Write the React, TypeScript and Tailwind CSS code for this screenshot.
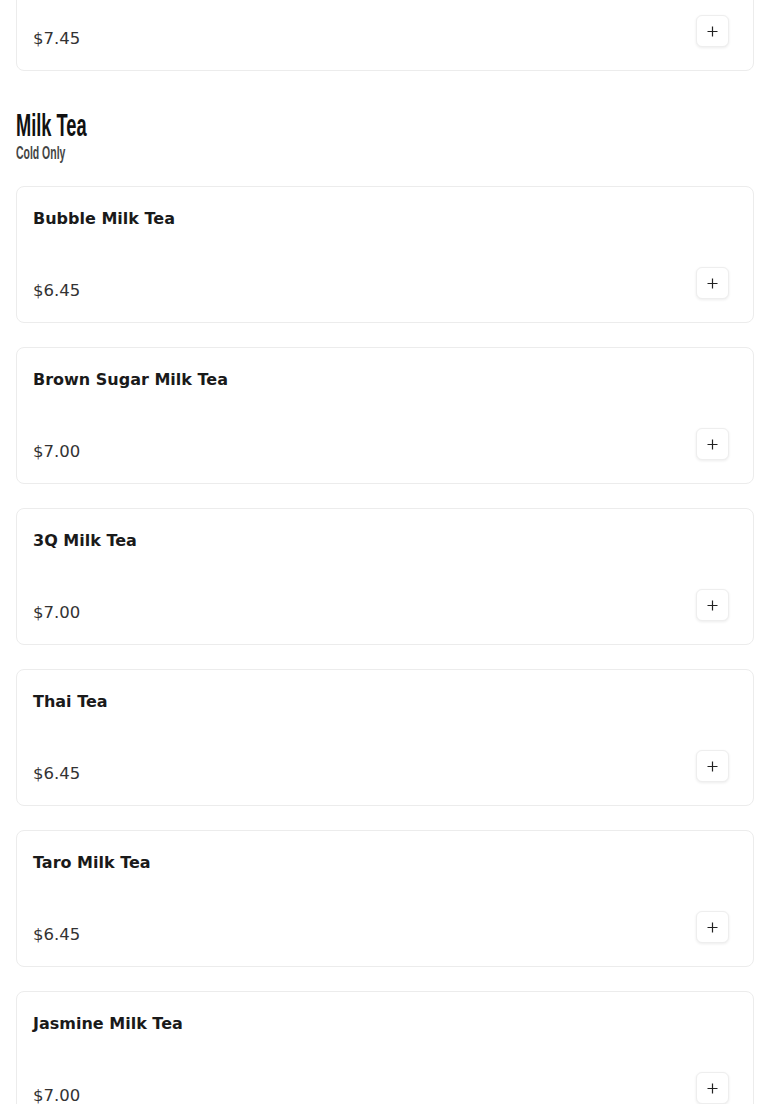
import React from "react";

const items = [
  { name: "Bubble Milk Tea", price: "$6.45" },
  { name: "Brown Sugar Milk Tea", price: "$7.00" },
  { name: "3Q Milk Tea", price: "$7.00" },
  { name: "Thai Tea", price: "$6.45" },
  { name: "Taro Milk Tea", price: "$6.45" },
  { name: "Jasmine Milk Tea", price: "$7.00" },
];

function PlusButton() {
  return (
    <button className="w-[33px] h-[32px] rounded-md border border-[#eeeeee] bg-white shadow-[0_1px_3px_rgba(0,0,0,0.08)] flex items-center justify-center">
      <svg width="11" height="11" viewBox="0 0 11 11" fill="none">
        <path d="M5.5 0.5v10M0.5 5.5h10" stroke="#222" strokeWidth="1.2" />
      </svg>
    </button>
  );
}

function Card({ name, price }: { name?: string; price: string }) {
  return (
    <div className="h-[137px] rounded-lg border border-[#ececec] bg-white flex flex-col justify-between pl-4 pr-6 pt-5 pb-[23px]">
      <div className="text-[16px] leading-6 font-bold text-[#1a1a1a]">{name ?? "\u00a0"}</div>
      <div className="flex items-end justify-between">
        <div className="text-[16.5px] leading-6 text-[#333] mb-[-4px]">{price}</div>
        <PlusButton />
      </div>
    </div>
  );
}

export default function App() {
  return (
    <div
      className="min-h-screen bg-white px-4 overflow-hidden"
      style={{ fontFamily: "'DejaVu Sans', 'Noto Sans', sans-serif" }}
    >
      <div className="-mt-[66px]">
        <Card price="$7.45" />
      </div>
      <div className="pt-[36px] pb-[21px]" style={{ fontFamily: "'Liberation Sans', Arial, sans-serif" }}>
        <h2 className="text-[32px] leading-9 text-[#111] font-bold">
          <span className="inline-block origin-left scale-x-[0.57]">Milk Tea</span>
        </h2>
        <div className="text-[19px] leading-6 text-[#444] font-bold -mt-[2px]">
          <span className="inline-block origin-left scale-x-[0.55]">Cold Only</span>
        </div>
      </div>
      <div className="flex flex-col gap-6">
        {items.map((it) => (
          <Card key={it.name} name={it.name} price={it.price} />
        ))}
      </div>
    </div>
  );
}
